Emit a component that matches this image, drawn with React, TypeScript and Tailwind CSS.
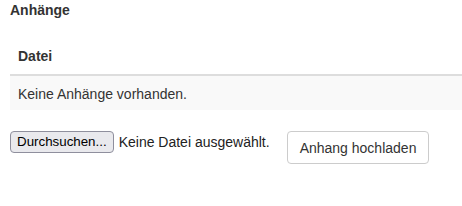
export default function App() {
  return (
    <div className="pl-[10px] font-['Liberation_Sans',Arial,sans-serif] text-[14px] leading-[20px] text-[#333] bg-white min-h-[206px]">
      <h4 className="font-bold h-[20px]">Anhänge</h4>

      <div className="mt-[18px]">
        <div className="h-[38px] px-[8px] flex items-center font-bold border-b-2 border-[#ddd]">
          Datei
        </div>
        <div className="h-[34px] px-[8px] pt-[1px] flex items-center bg-[#f9f9f9]">
          Keine Anhänge vorhanden.
        </div>
      </div>

      <div className="mt-[21px] flex items-start">
        <div className="flex items-center h-[22px]">
          <button
            type="button"
            className="h-[22px] px-[6px] text-[13.33px] leading-[18px] text-black bg-[#e9e9ed] border border-[#8f8f9d] rounded-[4px]"
          >
            Durchsuchen...
          </button>
          <span className="ml-[5px] text-[#222]">Keine Datei ausgewählt.</span>
        </div>
        <button
          type="button"
          className="ml-[17px] h-[33px] px-[12px] border border-[#ccc] rounded-[4px] bg-white text-[#333] leading-[20px]"
        >
          Anhang hochladen
        </button>
      </div>
    </div>
  );
}
